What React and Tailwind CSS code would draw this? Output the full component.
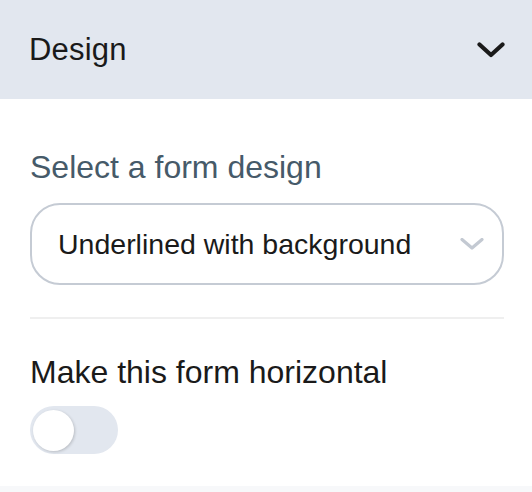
export default function App() {
  return (
    <div className="w-[532px] h-[492px] bg-white overflow-hidden flex flex-col" style={{ fontFamily: '"Liberation Sans", Arial, sans-serif' }}>
      <div className="h-[99px] shrink-0 bg-[#e2e7ef] flex items-center justify-between pl-[29px] pr-[27px]">
        <span className="text-[31px] leading-[36px] text-[#1a1a1a] tracking-[0.2px]">Design</span>
        <svg width="28" height="16" viewBox="0 0 28 16" fill="none">
          <path d="M2.5 2.5 L14 13 L25.5 2.5" stroke="#1a1a1a" strokeWidth="4.2" strokeLinecap="round" strokeLinejoin="round" />
        </svg>
      </div>
      <div className="flex flex-col pl-[30px] pr-[28px] pt-[49px]">
        <div className="text-[32px] leading-[38px] text-[#465a69]">Select a form design</div>
        <div className="mt-[17px] h-[82px] rounded-[30px] border-2 border-[#c5cbd4] flex items-center justify-between pl-[26px] pr-[18px]">
          <span className="text-[28.5px] leading-[34px] text-[#1a1a1a]">Underlined with background</span>
          <svg width="24" height="12" viewBox="0 0 24 12" fill="none">
            <path d="M2 1.5 L12 10 L22 1.5" stroke="#c3c9d2" strokeWidth="3.2" strokeLinecap="round" strokeLinejoin="round" />
          </svg>
        </div>
        <div className="mt-[32px] h-[2px] bg-[#efefef]" />
        <div className="mt-[34px] text-[32px] leading-[38px] text-[#1a1a1a]">Make this form horizontal</div>
        <div className="mt-[15px] w-[88px] h-[48px] rounded-full bg-[#e2e7ef] flex items-center pl-[3px]">
          <div className="w-[41px] h-[41px] rounded-full bg-white shadow-[1px_1px_3px_rgba(0,0,0,0.18)]" />
        </div>
      </div>
      <div className="mt-auto h-[6px] bg-[#f7f8fa]" />
    </div>
  );
}
